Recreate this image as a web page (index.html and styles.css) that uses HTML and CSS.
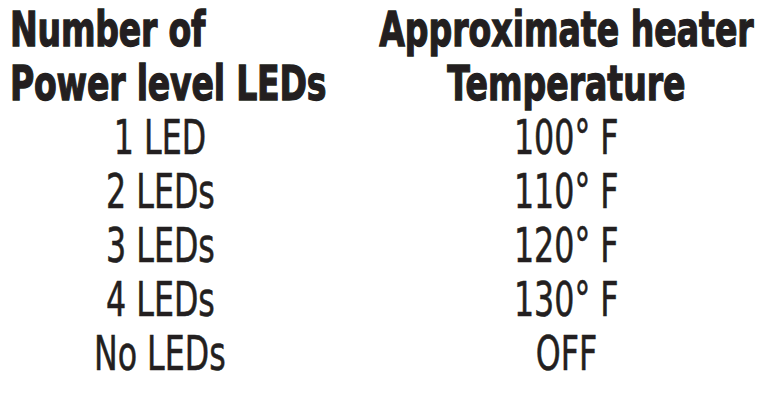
FILE: index.html
```html
<!doctype html>
<html>
<head>
<meta charset="utf-8">
<title>LED power levels</title>
<link rel="stylesheet" href="styles.css">
</head>
<body>
	<div class="chart">
		<div class="head left"><span>Number of<br>Power level LEDs</span></div>
		<div class="head right"><span>Approximate heater<br>Temperature</span></div>
		<div class="cell"><span>1 LED</span></div>
		<div class="cell"><span>100° F</span></div>
		<div class="cell"><span>2 LEDs</span></div>
		<div class="cell"><span>110° F</span></div>
		<div class="cell"><span>3 LEDs</span></div>
		<div class="cell"><span>120° F</span></div>
		<div class="cell"><span>4 LEDs</span></div>
		<div class="cell"><span>130° F</span></div>
		<div class="cell"><span>No LEDs</span></div>
		<div class="cell"><span>OFF</span></div>
	</div>
</body>
</html>
```
FILE: styles.css
```css
body {
	margin: 0;
	overflow: hidden;
	background: #fff;
	color: #231f20;
	font-family: "DejaVu Sans", sans-serif;
}
.chart {
	display: grid;
	grid-template-columns: 300px 376px;
	column-gap: 68px;
	padding: 2px 0 0 10px;
	font-size: 48px;
	line-height: 54px;
}
.chart span {
	display: block;
	white-space: nowrap;
}
.head {
	display: flex;
	font-weight: bold;
}
.head span {
	transform: scaleX(.69);
	-webkit-text-stroke: 1.4px #231f20;
}
.left {
	justify-content: flex-start;
}
.left span {
	transform-origin: left center;
	letter-spacing: -.3px;
}
.right {
	justify-content: center;
	text-align: center;
}
.cell {
	display: flex;
	justify-content: center;
}
.cell span {
	transform: scaleX(.66);
	-webkit-text-stroke: .6px #231f20;
}
```
